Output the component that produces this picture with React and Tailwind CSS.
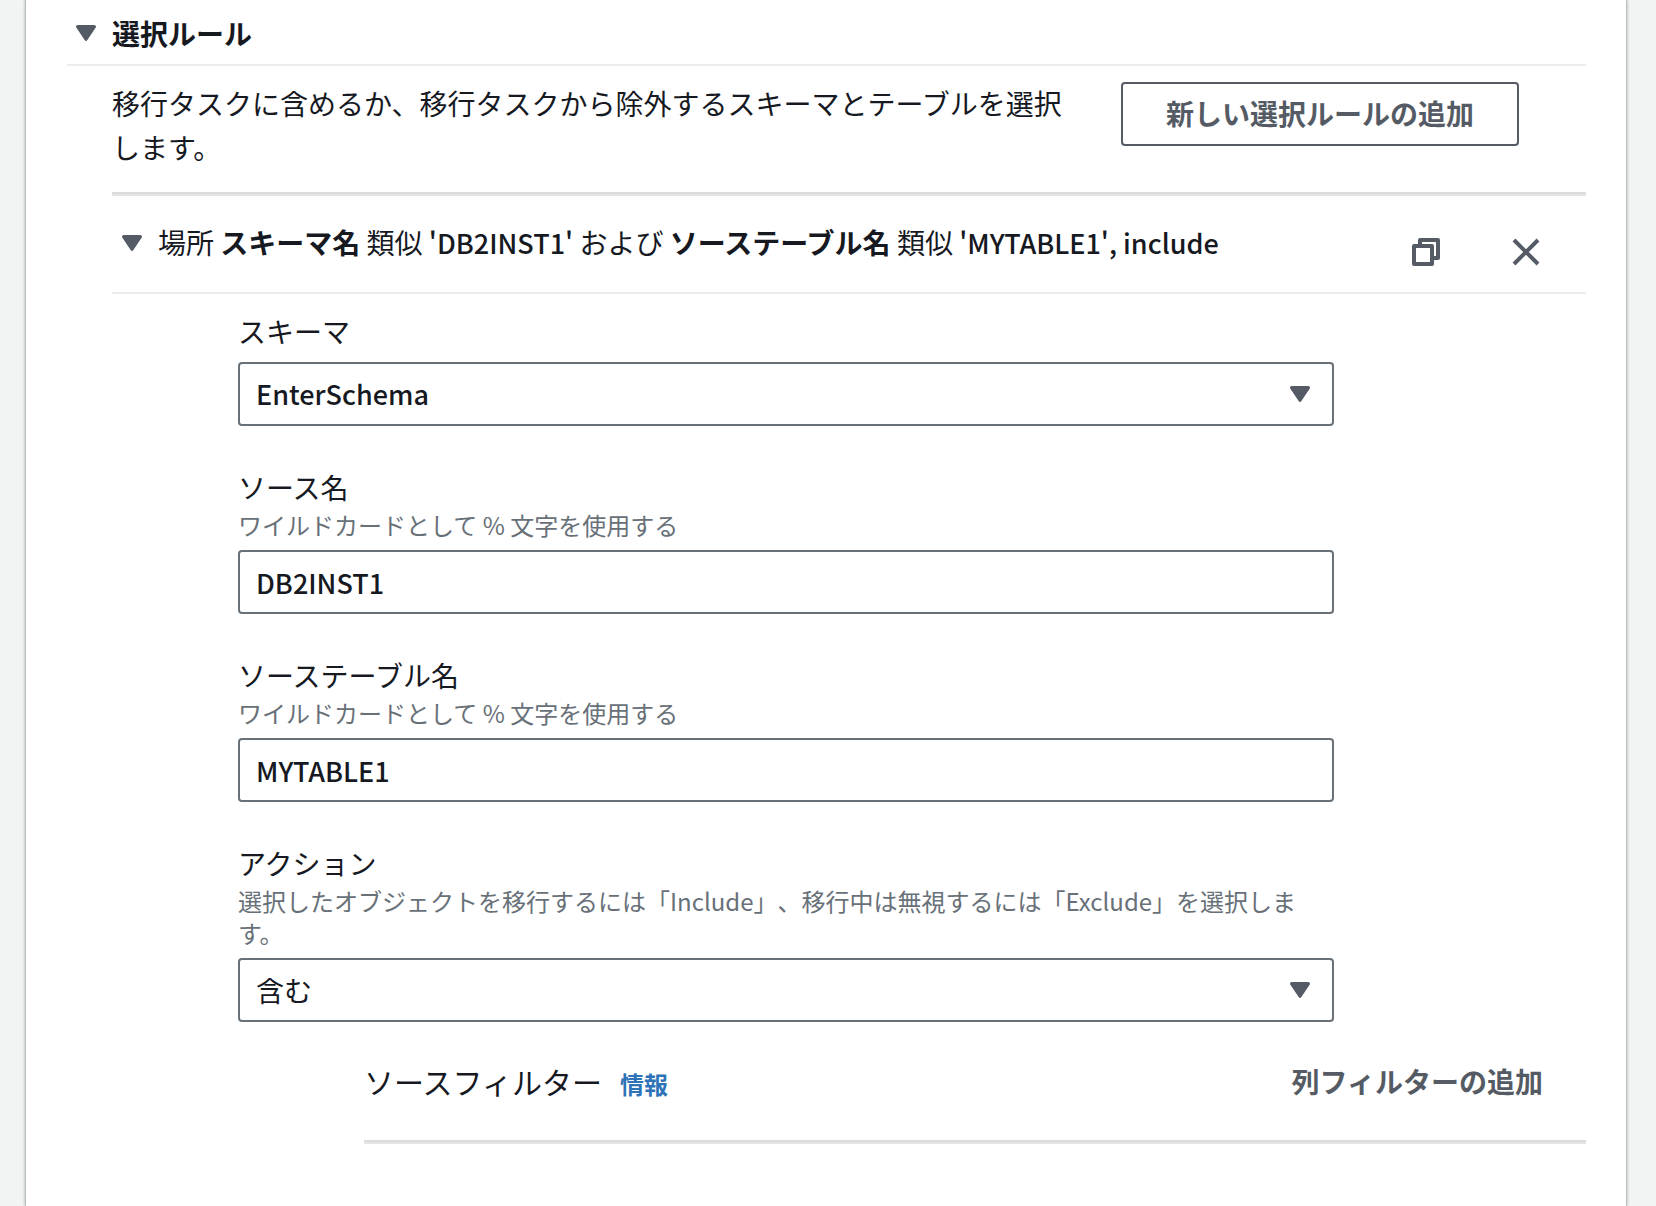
import { useId } from "react";

const FONT = "font-['Noto_Sans_CJK_JP',sans-serif]";

function Caret({ className = "" }) {
  return (
    <svg viewBox="0 0 20 16" className={`h-4 w-5 shrink-0 fill-[#545b64] ${className}`} aria-hidden="true">
      <path d="M1.8 0H18.2C19.7 0 20.5 1.6 19.6 2.8L11.2 15.2C10.6 16.2 9.4 16.2 8.8 15.2L.4 2.8C-.5 1.6.3 0 1.8 0Z" />
    </svg>
  );
}

function CopyIcon() {
  return (
    <svg viewBox="0 0 28 28" className="size-7 fill-none stroke-[#545b64] stroke-4" strokeLinejoin="round" aria-hidden="true">
      <path d="M2 8H20V26H2Z" />
      <path d="M8 8V2H26V20H20" />
    </svg>
  );
}

function CloseIcon() {
  return (
    <svg viewBox="0 0 28 28" className="size-7 fill-none stroke-[#545b64] stroke-4" aria-hidden="true">
      <path d="M2 2L26 26M26 2L2 26" />
    </svg>
  );
}

const CONTROL =
  "h-16 w-full appearance-none rounded-sm border-2 border-[#687078] bg-white px-4 text-[#16191f] outline-none";
const LATIN = "text-[27px] font-medium";

function Field({ label, hint, children }) {
  const id = useId();
  return (
    <div className="flex flex-col">
      <label htmlFor={id} className="leading-[42px]">
        {label}
      </label>
      {hint && <p className="mt-px -mb-px text-2xl leading-8 text-[#687078]">{hint}</p>}
      <div className="mt-[10px]">{children(id)}</div>
    </div>
  );
}

function SelectBox({ id, value, className = "text-[28px]" }) {
  return (
    <div className="relative">
      <select id={id} className={`${CONTROL} ${className}`} defaultValue={value}>
        <option>{value}</option>
      </select>
      <Caret className="pointer-events-none absolute top-6 right-6" />
    </div>
  );
}

function Divider() {
  return <div className="h-1 border-t-2 border-[#dcdcdc] bg-[#e5e5e5]" />;
}

export default function App() {
  return (
    <div className={`min-h-screen bg-[#f2f3f3] pr-[29px] pl-[25px] text-[28px] text-[#16191f] ${FONT} [text-spacing-trim:space-all]`} lang="ja">
      <main className="min-h-screen border-x border-[#b9bec3] bg-white pr-10 pb-[62px] pl-[41px] shadow-[0_0_3px_rgba(0,28,36,0.3)]">
        <button type="button" className="flex w-full items-center gap-4 border-b-2 border-[#eaeded] pt-[11px] pb-[9px] pl-[9px] text-left font-bold leading-11">
          <Caret />
          <h2>選択ルール</h2>
        </button>

        <div className="pl-[45px]">
          <div className="flex items-start justify-between gap-14 pt-[15px] pr-[67px] pb-[23px]">
            <p className="flex-1 leading-11">
              移行タスクに含めるか、移行タスクから除外するスキーマとテーブルを選択します。
            </p>
            <button type="button" className="mt-px h-16 shrink-0 rounded-sm border-2 border-[#545b64] px-[43px] pb-0.5 font-bold text-[#545b64]">
              新しい選択ルールの追加
            </button>
          </div>

          <Divider />

          <div className="flex items-start justify-between border-b-2 border-[#eaeded] pt-6 pr-[46px] pb-6 pl-[10px]">
            <button type="button" className="flex items-center gap-4 text-left leading-11">
              <Caret />
              <span>
                場所 <b>スキーマ名</b> 類似 <span className={LATIN}>'DB2INST1'</span> および <b>ソーステーブル名</b> 類似{" "}
                <span className={LATIN}>'MYTABLE1', include</span>
              </span>
            </button>
            <div className="flex gap-[72px] pt-[18px] pb-0.5">
              <button type="button" aria-label="コピー">
                <CopyIcon />
              </button>
              <button type="button" aria-label="削除">
                <CloseIcon />
              </button>
            </div>
          </div>

          <div className="mr-[252px] ml-[126px] flex flex-col gap-10 pt-4">
            <Field label="スキーマ">{(id) => <SelectBox id={id} value="EnterSchema" className={LATIN} />}</Field>
            <Field label="ソース名" hint="ワイルドカードとして % 文字を使用する">
              {(id) => <input id={id} type="text" className={`${CONTROL} ${LATIN}`} defaultValue="DB2INST1" />}
            </Field>
            <Field label="ソーステーブル名" hint="ワイルドカードとして % 文字を使用する">
              {(id) => <input id={id} type="text" className={`${CONTROL} ${LATIN}`} defaultValue="MYTABLE1" />}
            </Field>
            <Field
              label="アクション"
              hint="選択したオブジェクトを移行するには「Include」、移行中は無視するには「Exclude」を選択します。"
            >
              {(id) => <SelectBox id={id} value="含む" />}
            </Field>
          </div>

          <div className="ml-[252px]">
            <div className="flex items-center justify-between pt-[35px] pr-[43px] pb-[35px]">
              <div className="flex items-baseline gap-[18px]">
                <h3 className="text-3xl leading-12">ソースフィルター</h3>
                <a href="#info" className="text-2xl font-bold text-[#2e73b8]">
                  情報
                </a>
              </div>
              <button type="button" className="font-bold leading-12 text-[#545b64]">
                列フィルターの追加
              </button>
            </div>
            <Divider />
          </div>
        </div>
      </main>
    </div>
  );
}
